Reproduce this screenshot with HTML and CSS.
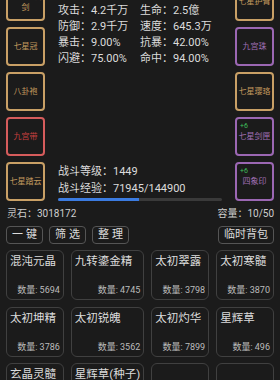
FILE: index.html
```html
<!DOCTYPE html>
<html lang="zh">
<head>
<meta charset="utf-8">
<link rel="stylesheet" href="styles.css">
</head>
<body>
<div class="page">
  <div class="top">
    <div class="slots">
      <div class="slot gold">七星龙渊剑</div>
      <div class="slot gold">七星冠</div>
      <div class="slot gold">八卦袍</div>
      <div class="slot red">九宫带</div>
      <div class="slot gold">七星踏云</div>
    </div>
    <div class="center">
      <div class="stats">
        <div>攻击：4.2千万</div><div>生命：2.5億</div>
        <div>防御：2.9千万</div><div>速度：645.3万</div>
        <div>暴击：9.00%</div><div>抗暴：42.00%</div>
        <div>闪避：75.00%</div><div>命中：94.00%</div>
      </div>
      <div class="combat">
        <div>战斗等级：1449</div>
        <div>战斗经验：71945/144900</div>
        <div class="bar"><div class="fill" style="width:49.65%"></div></div>
      </div>
    </div>
    <div class="slots">
      <div class="slot gold">七星护臂</div>
      <div class="slot purple">九宫珠</div>
      <div class="slot gold">七星璎珞</div>
      <div class="slot purple"><span class="plus">+6</span>七星剑匣</div>
      <div class="slot purple"><span class="plus">+6</span>四象印</div>
    </div>
  </div>
  <div class="info">
    <span>灵石：3018172</span>
    <span>容量：10/50</span>
  </div>
  <div class="toolbar">
    <div class="btn short">一键</div>
    <div class="btn short">筛选</div>
    <div class="btn short">整理</div>
    <div class="btn wide">临时背包</div>
  </div>
  <div class="grid">
    <div class="card"><div class="name">混沌元晶</div><div class="count">数量: 5694</div></div>
    <div class="card"><div class="name">九转鎏金精</div><div class="count">数量: 4745</div></div>
    <div class="card"><div class="name">太初翠露</div><div class="count">数量: 3798</div></div>
    <div class="card"><div class="name">太初寒髓</div><div class="count">数量: 3870</div></div>
    <div class="card"><div class="name">太初坤精</div><div class="count">数量: 3786</div></div>
    <div class="card"><div class="name">太初锐魄</div><div class="count">数量: 3562</div></div>
    <div class="card"><div class="name">太初灼华</div><div class="count">数量: 7899</div></div>
    <div class="card"><div class="name">星辉草</div><div class="count">数量: 496</div></div>
    <div class="card"><div class="name">玄晶灵髓</div><div class="count"></div></div>
    <div class="card"><div class="name">星辉草(种子)</div><div class="count"></div></div>
    <div class="card"><div class="name"></div><div class="count"></div></div>
    <div class="card"><div class="name"></div><div class="count"></div></div>
  </div>
</div>
</body>
</html>
```
FILE: styles.css
```css
* { box-sizing: border-box; margin: 0; padding: 0; }
html, body { background: #1b1b1b; }
body {
  width: 280px;
  height: 380px;
  overflow: hidden;
  font-family: Roboto, "Noto Sans CJK SC", sans-serif;
  color: #dcdcdc;
}
.page { margin-top: -18px; }
.top { display: flex; padding: 0 6px; gap: 13px; }
.slots { display: flex; flex-direction: column; gap: 6px; width: 39px; flex: none; }
.slot {
  width: 39px; height: 39px;
  border: 2px solid;
  border-radius: 4px;
  display: flex; align-items: center; justify-content: center;
  text-align: center;
  font-size: 8px; line-height: 11px;
  position: relative;
  padding: 0 1px;
}
.gold { border-color: #c9a066; color: #c29a5e; }
.red { border-color: #d65c5c; color: #c9403f; }
.purple { border-color: #9b67b3; color: #a070b5; }
.plus {
  position: absolute; left: 3px; top: 3px;
  font-size: 7px; line-height: 8px; color: #3fbf5a;
}
.center {
  flex: 1;
  display: flex; flex-direction: column; justify-content: space-between;
  padding-top: 21px;
}
.stats {
  display: grid;
  grid-template-columns: 82px 82px;
  font-size: 11px; line-height: 16px;
}
.combat { font-size: 11px; line-height: 17px; }
.bar { height: 3px; margin-top: 1px; background: #3a3a3a; border-radius: 2px; overflow: hidden; }
.fill { height: 100%; background: #3b7be0; }
.info {
  display: flex; justify-content: space-between;
  padding: 0 6px 0 7px; margin-top: 6px;
  font-size: 10px; line-height: 14px; color: #cfcfcf;
}
.toolbar { display: flex; gap: 6px; padding: 0 6px; margin-top: 5px; }
.btn {
  height: 18px;
  border: 1px solid #555;
  border-radius: 4px;
  font-size: 11px; line-height: 16px;
  display: flex; justify-content: center;
  color: #dcdcdc;
}
.short { width: 37px; letter-spacing: 3px; padding-left: 3px; }
.wide { margin-left: auto; width: 56px; }
.grid {
  display: grid;
  grid-template-columns: repeat(4, 1fr);
  column-gap: 7px; row-gap: 6.5px;
  padding: 0 6px; margin-top: 6px;
}
.card {
  height: 50px;
  border: 1px solid #404040;
  border-radius: 6px;
  padding: 3px 3px 3px 3px;
  display: flex; flex-direction: column; justify-content: space-between;
}
.name { font-size: 11.5px; line-height: 15px; color: #dcdcdc; white-space: nowrap; }
.count { font-size: 9px; line-height: 11px; text-align: right; color: #bbbbbb; }
```
